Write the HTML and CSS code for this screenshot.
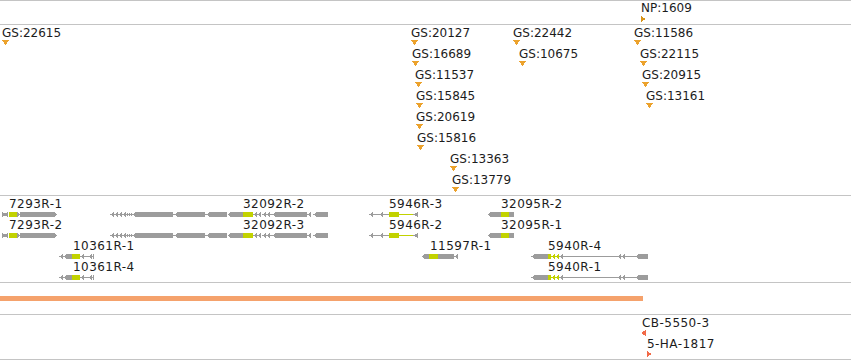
FILE: index.html
```html
<!DOCTYPE html>
<html>
<head>
<meta charset="utf-8">
<link rel="stylesheet" href="styles.css">
</head>
<body>
<svg class="defs" width="0" height="0" aria-hidden="true">
  <defs>
    <symbol id="tri-down" viewBox="0 0 7 5"><polygon points="0,0 7,0 3.5,5"/></symbol>
    <symbol id="tri-right" viewBox="0 0 5 6"><polygon points="0,0 5,3 0,6"/></symbol>
    <symbol id="tri-left" viewBox="0 0 5 6"><polygon points="5,0 0,3 5,6"/></symbol>

    <symbol id="g7293" viewBox="0 0 56 7">
      <g class="utr">
        <rect x="0" y="1" width="1" height="5"/><rect x="1" y="2" width="5" height="3"/><rect x="5" y="1" width="1" height="5"/>
        <polygon points="15,1 18,3.5 15,6"/>
        <polygon points="18,1 52,1 55,3.5 52,6 18,6"/>
      </g>
      <rect class="cds" x="7" y="1" width="8" height="5"/>
    </symbol>

    <symbol id="g32092" viewBox="0 0 218 7">
      <g class="utr">
        <polygon points="0,3.5 4,1 4,6"/><polygon points="4,3.5 8,1 8,6"/><polygon points="8,3.5 12,1 12,6"/><polygon points="12,3.5 16,1 16,6"/>
        <rect x="16" y="3" width="7" height="1"/><rect x="17" y="2" width="1" height="3"/><rect x="19" y="2" width="1" height="3"/><rect x="21" y="2" width="1" height="3"/>
        <polygon points="23,3.5 26,1 63,1 63,6 26,6"/>
        <rect x="63" y="3" width="2" height="1"/>
        <polygon points="65,3.5 68,1 95,1 95,6 68,6"/>
        <rect x="95" y="3" width="2" height="1"/>
        <polygon points="97,3.5 100,1 117,1 117,6 100,6"/>
        <polygon points="118,3.5 121,1 133,1 133,6 121,6"/>
        <polygon points="143,3.5 147,1 147,6"/><polygon points="147,3.5 151,1 151,6"/><polygon points="152,3.5 156,1 156,6"/><polygon points="156,3.5 160,1 160,6"/>
        <rect x="160" y="3" width="2" height="1"/>
        <polygon points="162,3.5 166,1 197,1 197,6 166,6"/>
        <polygon points="197,3.5 201,1 201,6"/>
        <polygon points="203,3.5 207,1 218,1 218,6 207,6"/>
      </g>
      <rect class="cds" x="133" y="1" width="10" height="5"/>
    </symbol>

    <symbol id="g10361" viewBox="0 0 35 7">
      <g class="utr">
        <polygon points="0,3.5 4,1 4,6"/><polygon points="4,3.5 8,1 13,1 13,6 8,6"/>
        <rect x="21" y="3" width="14" height="1"/>
        <polygon points="21,3.5 25,1 25,6"/>
        <polygon points="29,3.5 33,1 33,6"/>
        <rect x="34" y="1" width="1" height="5"/>
      </g>
      <rect class="cds" x="13" y="1" width="8" height="5"/>
    </symbol>

    <symbol id="g5946" viewBox="0 0 49 7">
      <g class="utr">
        <polygon points="0,3.5 4,1 4,6"/>
        <rect x="4" y="3" width="16" height="1"/>
        <polygon points="10,3.5 14,1 14,6"/>
        <polygon points="44,3.5 49,1 49,6"/>
      </g>
      <rect class="cds" x="20" y="1" width="10" height="5"/>
      <rect class="cds" x="30" y="3" width="14" height="1"/>
    </symbol>

    <symbol id="g32095" viewBox="0 0 26 7">
      <g class="utr">
        <polygon points="0,3.5 3,1 13,1 13,6 3,6"/>
        <rect x="21" y="1" width="5" height="5"/>
      </g>
      <rect class="cds" x="13" y="1" width="8" height="5"/>
    </symbol>

    <symbol id="g11597" viewBox="0 0 36 7">
      <g class="utr">
        <polygon points="0,3.5 3,1 7,1 7,6 3,6"/>
        <rect x="16" y="1" width="16" height="5"/>
        <polygon points="32,3.5 36,1 36,6"/>
      </g>
      <rect class="cds" x="7" y="1" width="9" height="5"/>
    </symbol>

    <symbol id="g5940" viewBox="0 0 117 7">
      <g class="utr">
        <polygon points="0,3.5 4,1 17,1 17,6 4,6"/>
        <polygon points="28,3.5 32,1 32,6"/>
        <rect x="32" y="3" width="72" height="1"/>
        <polygon points="86,3.5 90,1 90,6"/><polygon points="90,3.5 94,1 94,6"/>
        <polygon points="104,3.5 108,1 117,1 117,6 108,6"/>
      </g>
      <g class="cds">
        <rect x="17" y="1" width="3" height="5"/>
        <polygon points="20,3.5 24,1 24,6"/><polygon points="24,3.5 28,1 28,6"/>
      </g>
    </symbol>
  </defs>
</svg>

<div class="browser">
  <div class="track t1">
    <div class="feat" style="--x:641;--r:0">
      <span class="label">NP:1609</span>
      <svg class="mark np" width="5" height="6"><use href="#tri-right"/></svg>
    </div>
  </div>

  <div class="track t2">
    <div class="feat" style="--x:2;--r:0"><span class="label">GS:22615</span><svg class="mark gs" width="7" height="5"><use href="#tri-down"/></svg></div>
    <div class="feat" style="--x:411;--r:0"><span class="label">GS:20127</span><svg class="mark gs" width="7" height="5"><use href="#tri-down"/></svg></div>
    <div class="feat" style="--x:412;--r:1"><span class="label">GS:16689</span><svg class="mark gs" width="7" height="5"><use href="#tri-down"/></svg></div>
    <div class="feat" style="--x:415;--r:2"><span class="label">GS:11537</span><svg class="mark gs" width="7" height="5"><use href="#tri-down"/></svg></div>
    <div class="feat" style="--x:416;--r:3"><span class="label">GS:15845</span><svg class="mark gs" width="7" height="5"><use href="#tri-down"/></svg></div>
    <div class="feat" style="--x:416;--r:4"><span class="label">GS:20619</span><svg class="mark gs" width="7" height="5"><use href="#tri-down"/></svg></div>
    <div class="feat" style="--x:417;--r:5"><span class="label">GS:15816</span><svg class="mark gs" width="7" height="5"><use href="#tri-down"/></svg></div>
    <div class="feat" style="--x:450;--r:6"><span class="label">GS:13363</span><svg class="mark gs" width="7" height="5"><use href="#tri-down"/></svg></div>
    <div class="feat" style="--x:452;--r:7"><span class="label">GS:13779</span><svg class="mark gs" width="7" height="5"><use href="#tri-down"/></svg></div>
    <div class="feat" style="--x:513;--r:0"><span class="label">GS:22442</span><svg class="mark gs" width="7" height="5"><use href="#tri-down"/></svg></div>
    <div class="feat" style="--x:519;--r:1"><span class="label">GS:10675</span><svg class="mark gs" width="7" height="5"><use href="#tri-down"/></svg></div>
    <div class="feat" style="--x:634;--r:0"><span class="label">GS:11586</span><svg class="mark gs" width="7" height="5"><use href="#tri-down"/></svg></div>
    <div class="feat" style="--x:640;--r:1"><span class="label">GS:22115</span><svg class="mark gs" width="7" height="5"><use href="#tri-down"/></svg></div>
    <div class="feat" style="--x:642;--r:2"><span class="label">GS:20915</span><svg class="mark gs" width="7" height="5"><use href="#tri-down"/></svg></div>
    <div class="feat" style="--x:646;--r:3"><span class="label">GS:13161</span><svg class="mark gs" width="7" height="5"><use href="#tri-down"/></svg></div>
  </div>

  <div class="track t3">
    <div class="feat" style="--x:2;--r:0;--lx:7"><span class="label">7293R-1</span><svg class="gene" width="56" height="7"><use href="#g7293"/></svg></div>
    <div class="feat" style="--x:2;--r:1;--lx:7"><span class="label">7293R-2</span><svg class="gene" width="56" height="7"><use href="#g7293"/></svg></div>
    <div class="feat" style="--x:59;--r:2;--lx:14"><span class="label">10361R-1</span><svg class="gene" width="35" height="7"><use href="#g10361"/></svg></div>
    <div class="feat" style="--x:59;--r:3;--lx:14"><span class="label">10361R-4</span><svg class="gene" width="35" height="7"><use href="#g10361"/></svg></div>
    <div class="feat" style="--x:110;--r:0;--lx:133"><span class="label">32092R-2</span><svg class="gene" width="218" height="7"><use href="#g32092"/></svg></div>
    <div class="feat" style="--x:110;--r:1;--lx:133"><span class="label">32092R-3</span><svg class="gene" width="218" height="7"><use href="#g32092"/></svg></div>
    <div class="feat" style="--x:369;--r:0;--lx:20"><span class="label">5946R-3</span><svg class="gene" width="49" height="7"><use href="#g5946"/></svg></div>
    <div class="feat" style="--x:369;--r:1;--lx:20"><span class="label">5946R-2</span><svg class="gene" width="49" height="7"><use href="#g5946"/></svg></div>
    <div class="feat" style="--x:422;--r:2;--lx:8"><span class="label">11597R-1</span><svg class="gene" width="36" height="7"><use href="#g11597"/></svg></div>
    <div class="feat" style="--x:488;--r:0;--lx:13"><span class="label">32095R-2</span><svg class="gene" width="26" height="7"><use href="#g32095"/></svg></div>
    <div class="feat" style="--x:488;--r:1;--lx:13"><span class="label">32095R-1</span><svg class="gene" width="26" height="7"><use href="#g32095"/></svg></div>
    <div class="feat" style="--x:531;--r:2;--lx:17"><span class="label">5940R-4</span><svg class="gene" width="117" height="7"><use href="#g5940"/></svg></div>
    <div class="feat" style="--x:531;--r:3;--lx:17"><span class="label">5940R-1</span><svg class="gene" width="117" height="7"><use href="#g5940"/></svg></div>
  </div>

  <div class="track t4">
    <div class="bar"></div>
  </div>

  <div class="track t5">
    <div class="feat" style="--x:641;--r:0;--lx:1"><span class="label">CB-5550-3</span><svg class="mark red" width="5" height="6"><use href="#tri-left"/></svg></div>
    <div class="feat" style="--x:647;--r:1"><span class="label">5-HA-1817</span><svg class="mark red" width="5" height="6"><use href="#tri-right"/></svg></div>
  </div>
</div>
</body>
</html>
```
FILE: styles.css
```css
html, body {
  margin: 0;
  padding: 0;
  background: #ffffff;
}

body {
  font-family: "DejaVu Sans", "Liberation Sans", sans-serif;
  font-size: 12px;
  line-height: 14px;
  color: #1c1c1c;
  width: 851px;
}

.defs {
  position: absolute;
  width: 0;
  height: 0;
  overflow: hidden;
}

.browser {
  display: flex;
  flex-direction: column;
}

.track {
  position: relative;
  border-top: 1px solid #c4c4c4;
}

.t1 { height: 23px; }
.t2 { height: 170px; }
.t3 { height: 86px; }
.t4 { height: 31px; }
.t5 { height: 44px; border-bottom: 1px solid #c4c4c4; }

.feat {
  position: absolute;
  left: calc(var(--x) * 1px);
  top: calc(var(--top) + var(--r) * 21px);
  white-space: nowrap;
  display: flex;
  flex-direction: column;
  align-items: flex-start;
}

.t1 .feat { --top: 0px; }
.t2 .feat, .t3 .feat, .t5 .feat { --top: 1px; }

.label {
  display: block;
  height: 14px;
  padding-left: calc(var(--lx, 0) * 1px);
}

.t3 .label,
.t5 .label {
  letter-spacing: 0.45px;
}

.mark, .gene {
  display: block;
  shape-rendering: crispEdges;
}

.mark.gs { fill: #eca22c; }
.mark.np { fill: #d8941a; margin-top: 1px; }
.mark.red { fill: #f26a48; }

.utr { fill: #9c9c9c; }
.cds { fill: #c2d200; }

.bar {
  margin-top: 13px;
  width: 643px;
  height: 5px;
  background: #f5a26c;
}
```
